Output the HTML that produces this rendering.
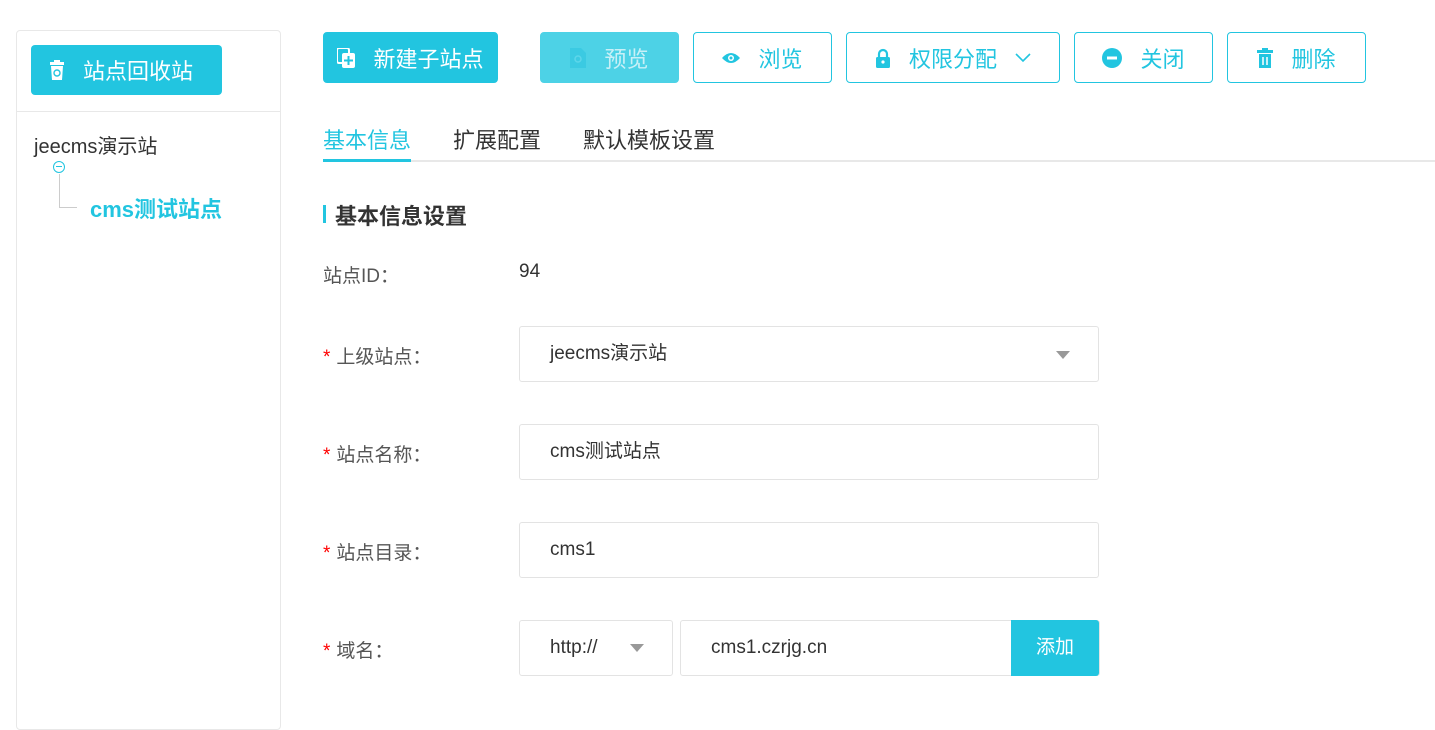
<!DOCTYPE html><html><head><meta charset="utf-8"><style>
*{box-sizing:border-box;margin:0;padding:0}
body{width:1435px;height:705px;overflow:hidden;background:#fff;font-family:"Liberation Sans","Noto Sans CJK SC",sans-serif;color:#333;position:relative}
.a{position:absolute}
.side{left:16px;top:30px;width:265px;height:700px;border:1px solid #e8e8e8;border-radius:4px}
.btn{position:absolute;top:32px;height:51px;border:1px solid #22c5e0;border-radius:4px;color:#22c5e0;font-size:22px;display:flex;align-items:center;justify-content:center;gap:18px;background:#fff}
.fill{background:#22c5e0;color:#fff}
.lbl{position:absolute;left:323px;font-size:19px;color:#555}
.lbl b{color:#f00;font-weight:normal;margin-right:6px}
.inp{position:absolute;left:519px;width:580px;height:56px;border:1px solid #e3e3e3;border-radius:3px;font-size:19px;padding-left:30px;line-height:54px;color:#333}
.tri{position:absolute;width:0;height:0;border-left:7px solid transparent;border-right:7px solid transparent;border-top:8px solid #999}
</style></head><body>
<div class="a side"></div>
<div class="a" style="left:31px;top:45px;width:191px;height:50px;background:#22c5e0;border-radius:4px;color:#fff;font-size:22px;display:flex;align-items:center;padding-left:18px;gap:18px">
<svg width="16" height="20" viewBox="0 0 16 20"><rect x="1" y="2" width="14" height="3" fill="#fff"/><rect x="5" y="0" width="6" height="3" fill="#fff"/><path d="M2 6h12l-1 14H3z" fill="#fff"/><circle cx="8" cy="13" r="3" fill="none" stroke="#22c5e0" stroke-width="1.4"/></svg>站点回收站</div>
<div class="a" style="left:17px;top:111px;width:263px;height:1px;background:#e8e8e8"></div>
<div class="a" style="left:34px;top:130px;font-size:20px;color:#333">jeecms演示站</div>
<div class="a" style="left:53px;top:161px;width:12px;height:12px;border:1px solid #22c5e0;border-radius:50%"></div>
<div class="a" style="left:56px;top:166px;width:6px;height:1px;background:#22c5e0"></div>
<div class="a" style="left:59px;top:174px;width:18px;height:34px;border-left:1px solid #ccc;border-bottom:1px solid #ccc"></div>
<div class="a" style="left:90px;top:192px;font-size:22px;font-weight:bold;color:#22c5e0">cms测试站点</div>

<div class="btn fill" style="left:323px;width:175px"><svg width="18" height="20" viewBox="0 0 18 20"><rect x="0" y="0" width="12" height="15" rx="2" fill="none" stroke="#fff" stroke-width="2"/><rect x="5" y="5" width="13" height="15" rx="2" fill="#fff"/><path d="M11.5 8v9M7 12.5h9" stroke="#22c5e0" stroke-width="2"/></svg>新建子站点</div>
<div class="btn" style="left:540px;width:139px;background:#4dd2e6;border-color:#4dd2e6;color:#c8f0f7"><svg width="16" height="20" viewBox="0 0 16 20"><path d="M0 0h11l5 5v15H0z" fill="#3bcae2"/><circle cx="8" cy="11" r="3" fill="none" stroke="#5dd6ea" stroke-width="1.5"/></svg>预览</div>
<div class="btn" style="left:693px;width:139px"><svg width="18" height="12" viewBox="0 0 18 12"><path d="M0 6Q9-4 18 6Q9 16 0 6z" fill="#22c5e0"/><circle cx="9" cy="6" r="3" fill="#fff"/><circle cx="9" cy="6" r="1.5" fill="#22c5e0"/></svg>浏览</div>
<div class="btn" style="left:846px;width:214px"><svg width="16" height="20" viewBox="0 0 16 20"><path d="M4 9V6a4 4 0 0 1 8 0v3" fill="none" stroke="#22c5e0" stroke-width="2.2"/><rect x="1" y="9" width="14" height="11" rx="1.5" fill="#22c5e0"/><circle cx="8" cy="14" r="1.6" fill="#fff"/></svg>权限分配<svg width="16" height="10" viewBox="0 0 16 10"><path d="M1 1l7 7 7-7" fill="none" stroke="#22c5e0" stroke-width="1.6"/></svg></div>
<div class="btn" style="left:1074px;width:139px"><svg width="20" height="20" viewBox="0 0 20 20"><circle cx="10" cy="10" r="10" fill="#22c5e0"/><rect x="5" y="8.5" width="10" height="3" fill="#fff"/></svg>关闭</div>
<div class="btn" style="left:1227px;width:139px"><svg width="16" height="20" viewBox="0 0 16 20"><rect x="0" y="2" width="16" height="3" fill="#22c5e0"/><rect x="5" y="0" width="6" height="3" fill="#22c5e0"/><rect x="2" y="6" width="12" height="14" fill="#22c5e0"/><path d="M6 9v8M10 9v8" stroke="#fff" stroke-width="1.5"/></svg>删除</div>

<div class="a" style="left:323px;top:123px;font-size:22px;color:#22c5e0">基本信息</div>
<div class="a" style="left:453px;top:123px;font-size:22px;color:#333">扩展配置</div>
<div class="a" style="left:583px;top:123px;font-size:22px;color:#333">默认模板设置</div>
<div class="a" style="left:323px;top:160px;width:1112px;height:2px;background:#e8e8e8"></div>
<div class="a" style="left:323px;top:159px;width:88px;height:3px;background:#22c5e0"></div>

<div class="a" style="left:323px;top:205px;width:3px;height:18px;background:#22c5e0"></div>
<div class="a" style="left:335px;top:199px;font-size:22px;font-weight:bold;color:#333">基本信息设置</div>

<div class="lbl" style="top:261px">站点ID：</div>
<div class="a" style="left:519px;top:261px;font-size:19px">94</div>
<div class="lbl" style="top:342px"><b>*</b>上级站点：</div>
<div class="inp" style="top:326px">jeecms演示站</div><div class="tri" style="left:1056px;top:351px"></div>
<div class="lbl" style="top:440px"><b>*</b>站点名称：</div>
<div class="inp" style="top:424px">cms测试站点</div>
<div class="lbl" style="top:538px"><b>*</b>站点目录：</div>
<div class="inp" style="top:522px">cms1</div>
<div class="lbl" style="top:636px"><b>*</b>域名：</div>
<div class="inp" style="top:620px;width:154px">http://</div><div class="tri" style="left:630px;top:644px"></div>
<div class="inp" style="top:620px;left:680px;width:420px">cms1.czrjg.cn</div>
<div class="a" style="left:1011px;top:620px;width:88px;height:56px;background:#22c5e0;border-radius:0 3px 3px 0;color:#fff;font-size:19px;line-height:56px;text-align:center">添加</div>
</body></html>
